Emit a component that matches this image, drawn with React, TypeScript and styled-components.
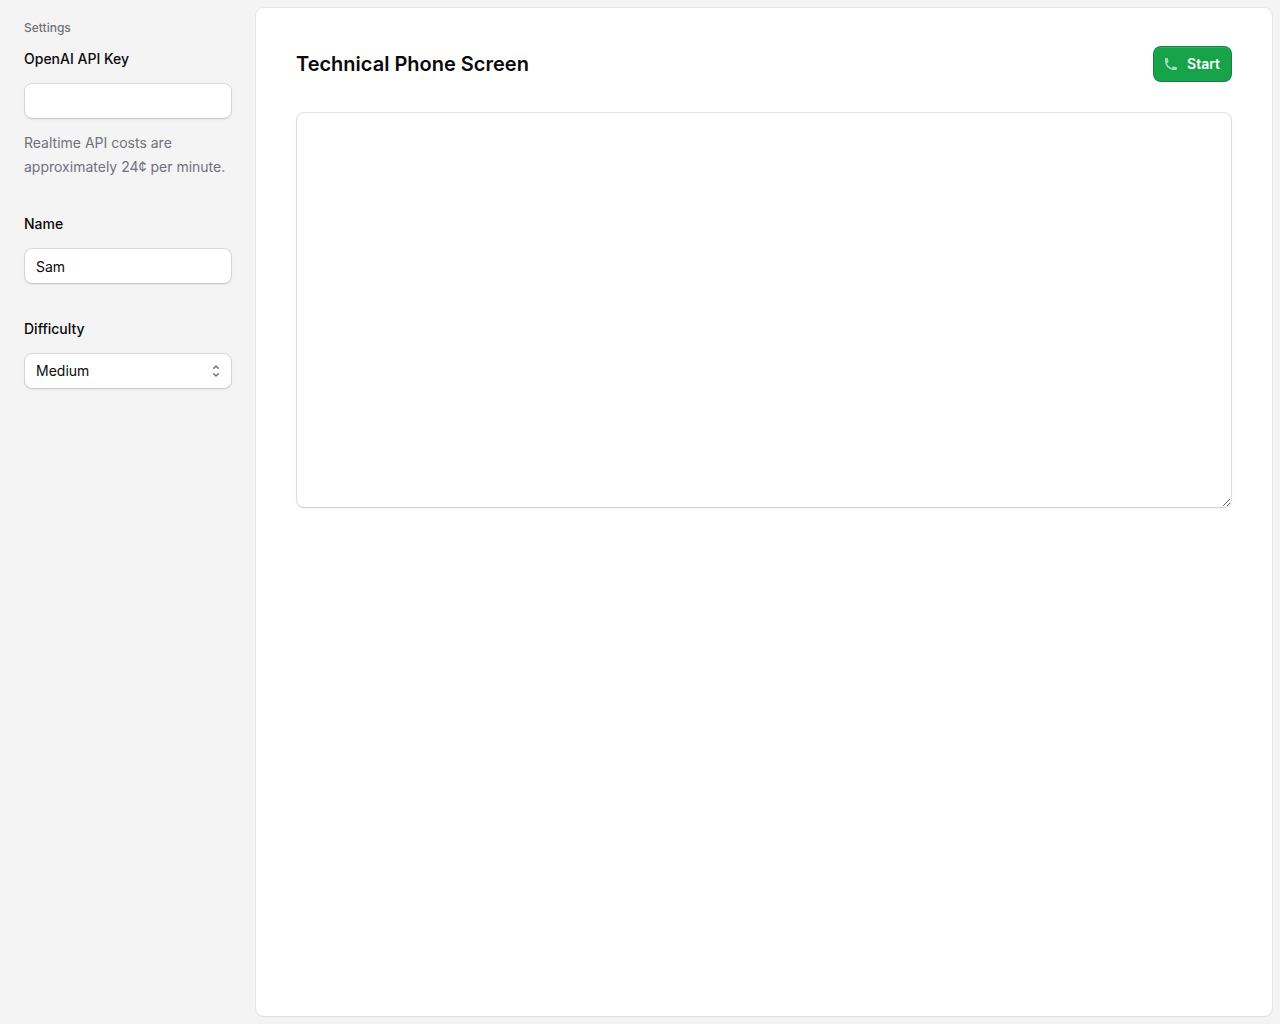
import React, { useState } from "react";
import styled, { createGlobalStyle } from "styled-components";

const ink = "#09090b";
const muted = "#71717a";

const GlobalStyle = createGlobalStyle`
  *, *::before, *::after { box-sizing: border-box; }
  body {
    margin: 0;
    background: #f4f4f5;
    color: ${ink};
    font-family: Inter, "Liberation Sans", sans-serif;
    -webkit-font-smoothing: antialiased;
  }
  h1, h2, p { margin: 0; }
`;

const Layout = styled.div`
  display: flex;
  min-height: 100vh;
`;

const Sidebar = styled.aside`
  flex: none;
  width: 256px;
  padding: 16px 24px;
`;

const SidebarHeading = styled.h2`
  margin-bottom: 6px;
  color: ${muted};
  font-size: 12px;
  line-height: 24px;
  font-weight: 500;
`;

const Fields = styled.form`
  display: flex;
  flex-direction: column;
  gap: 32px;
`;

const Field = styled.div`
  display: flex;
  flex-direction: column;
  gap: 12px;
`;

const Label = styled.label`
  font-size: 14px;
  line-height: 25px;
  font-weight: 500;
`;

const Description = styled.p`
  color: ${muted};
  font-size: 14px;
  line-height: 24px;
`;

const Control = styled.span`
  position: relative;
  isolation: isolate;
  display: block;

  &::before {
    content: "";
    position: absolute;
    z-index: -1;
    inset: 1px;
    border-radius: 7px;
    background: white;
    box-shadow: 0 1px 3px rgba(0, 0, 0, 0.1), 0 1px 2px -1px rgba(0, 0, 0, 0.1);
  }

  input, select, textarea {
    display: block;
    width: 100%;
    margin: 0;
    padding: 5px 11px;
    border: 1px solid rgba(9, 9, 11, 0.1);
    border-radius: 8px;
    background: transparent;
    color: ${ink};
    font: 400 14px/24px Inter, "Liberation Sans", sans-serif;
    appearance: none;
  }
`;

const TextInput = styled.input`
  height: 36px;
`;

const Select = styled.select`
  height: 36px;
`;

const Chevrons = styled.svg`
  position: absolute;
  top: 10px;
  right: 8px;
  width: 16px;
  height: 16px;
  stroke: ${muted};
  pointer-events: none;
`;

const Notes = styled.textarea`
  height: 396px;
  resize: vertical;
`;

const Main = styled.main`
  flex: 1;
  min-width: 0;
  display: flex;
  padding: 8px 8px 8px 0;
`;

const Card = styled.section`
  flex: 1;
  min-width: 0;
  padding: 38px 40px;
  border-radius: 8px;
  background: white;
  box-shadow: 0 0 0 1px rgba(9, 9, 11, 0.05), 0 1px 2px rgba(0, 0, 0, 0.05);
`;

const Header = styled.header`
  display: flex;
  align-items: center;
  justify-content: space-between;
  margin-bottom: 30px;
`;

const Title = styled.h1`
  font-size: 20px;
  line-height: 32px;
  font-weight: 600;
`;

const StartButton = styled.button`
  display: flex;
  align-items: center;
  gap: 8px;
  padding: 5px 11px 5px 9px;
  border: 1px solid rgba(21, 128, 61, 0.9);
  border-radius: 8px;
  background: #16a34a;
  box-shadow: inset 0 1px rgba(255, 255, 255, 0.15);
  color: white;
  font: 600 14px/24px Inter, "Liberation Sans", sans-serif;
  cursor: pointer;

  svg {
    width: 16px;
    height: 16px;
    fill: rgba(255, 255, 255, 0.6);
  }
`;

export default function App() {
  const [apiKey, setApiKey] = useState("");
  const [name, setName] = useState("Sam");
  const [difficulty, setDifficulty] = useState("Medium");

  return (
    <Layout>
      <GlobalStyle />
      <Sidebar>
        <SidebarHeading>Settings</SidebarHeading>
        <Fields onSubmit={(e) => e.preventDefault()}>
          <Field>
            <Label htmlFor="api-key">OpenAI API Key</Label>
            <Control>
              <TextInput
                id="api-key"
                type="password"
                autoComplete="off"
                value={apiKey}
                onChange={(e) => setApiKey(e.target.value)}
              />
            </Control>
            <Description>Realtime API costs are approximately 24¢ per minute.</Description>
          </Field>
          <Field>
            <Label htmlFor="name">Name</Label>
            <Control>
              <TextInput id="name" value={name} onChange={(e) => setName(e.target.value)} />
            </Control>
          </Field>
          <Field>
            <Label htmlFor="difficulty">Difficulty</Label>
            <Control>
              <Select
                id="difficulty"
                value={difficulty}
                onChange={(e) => setDifficulty(e.target.value)}
              >
                <option>Easy</option>
                <option>Medium</option>
                <option>Hard</option>
              </Select>
              <Chevrons viewBox="0 0 16 16" fill="none" aria-hidden="true">
                <path
                  d="M5.75 10.75L8 13L10.25 10.75M10.25 5.25L8 3L5.75 5.25"
                  strokeWidth="1.5"
                  strokeLinecap="round"
                  strokeLinejoin="round"
                />
              </Chevrons>
            </Control>
          </Field>
        </Fields>
      </Sidebar>
      <Main>
        <Card>
          <Header>
            <Title>Technical Phone Screen</Title>
            <StartButton type="button">
              <svg viewBox="0 0 16 16" aria-hidden="true">
                <path
                  fillRule="evenodd"
                  d="m3.855 7.286 1.067-.534a1 1 0 0 0 .542-1.046l-.44-2.858A1 1 0 0 0 4.036 2H3a1 1 0 0 0-1 1v2c0 .709.082 1.4.238 2.062a9.012 9.012 0 0 0 6.7 6.7A9.024 9.024 0 0 0 11 14h2a1 1 0 0 0 1-1v-1.036a1 1 0 0 0-.848-.988l-2.858-.44a1 1 0 0 0-1.046.542l-.534 1.067a7.52 7.52 0 0 1-4.86-4.859Z"
                />
              </svg>
              Start
            </StartButton>
          </Header>
          <Control>
            <Notes aria-label="Notes" />
          </Control>
        </Card>
      </Main>
    </Layout>
  );
}
